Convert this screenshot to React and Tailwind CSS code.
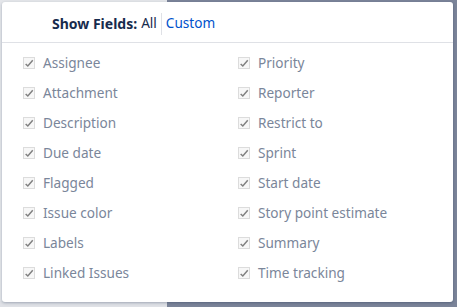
const left = ['Assignee', 'Attachment', 'Description', 'Due date', 'Flagged', 'Issue color', 'Labels', 'Linked Issues']
const right = ['Priority', 'Reporter', 'Restrict to', 'Sprint', 'Start date', 'Story point estimate', 'Summary', 'Time tracking']

function Field({ label }) {
  return (
    <div className="h-[30px] flex items-center gap-[8px]">
      <span className="w-[12px] h-[12px] border border-[#dcdcdc] bg-[#f7f7f7] flex items-center justify-center">
        <svg width="11" height="11" viewBox="0 0 12 12">
          <path d="M2 6.5 L4.6 9 L10.5 2.2" fill="none" stroke="#808080" strokeWidth="1.8" />
        </svg>
      </span>
      <span className="text-[13.6px] text-[#7a869a]">{label}</span>
    </div>
  )
}

export default function App() {
  return (
    <div className="relative w-[457px] h-[307px] overflow-hidden bg-[#e4e6ea]" style={{ fontFamily: "'Noto Sans', 'Open Sans', sans-serif" }}>
      <div className="absolute left-[167px] right-0 top-0 bottom-0 bg-[#7b8499]" />
      <div className="absolute left-[0px] w-[167px] bottom-0 h-[6px] bg-[#dfe1e6]" />
      <div className="absolute left-[2px] top-[2px] w-[451px] h-[300px] bg-white rounded-[3px] shadow-[0_1px_3px_rgba(9,30,66,0.3)]">
        <div className="h-[41px] border-b border-[#dfe1e6] flex items-center pl-[50px] pt-[3px] text-[14px]">
          <span className="font-bold text-[#172b4d]">Show Fields:</span>
          <span className="ml-[4px] text-[13.6px] text-[#172b4d]">All</span>
          <span className="mx-[4px] w-px h-[22px] bg-[#dfe1e6]" />
          <span className="text-[13.6px] text-[#0052cc]">Custom</span>
        </div>
        <div className="grid grid-cols-2 pl-[21px] pt-[5px]">
          <div className="flex flex-col">
            {left.map(l => <Field key={l} label={l} />)}
          </div>
          <div className="flex flex-col">
            {right.map(l => <Field key={l} label={l} />)}
          </div>
        </div>
      </div>
    </div>
  )
}
